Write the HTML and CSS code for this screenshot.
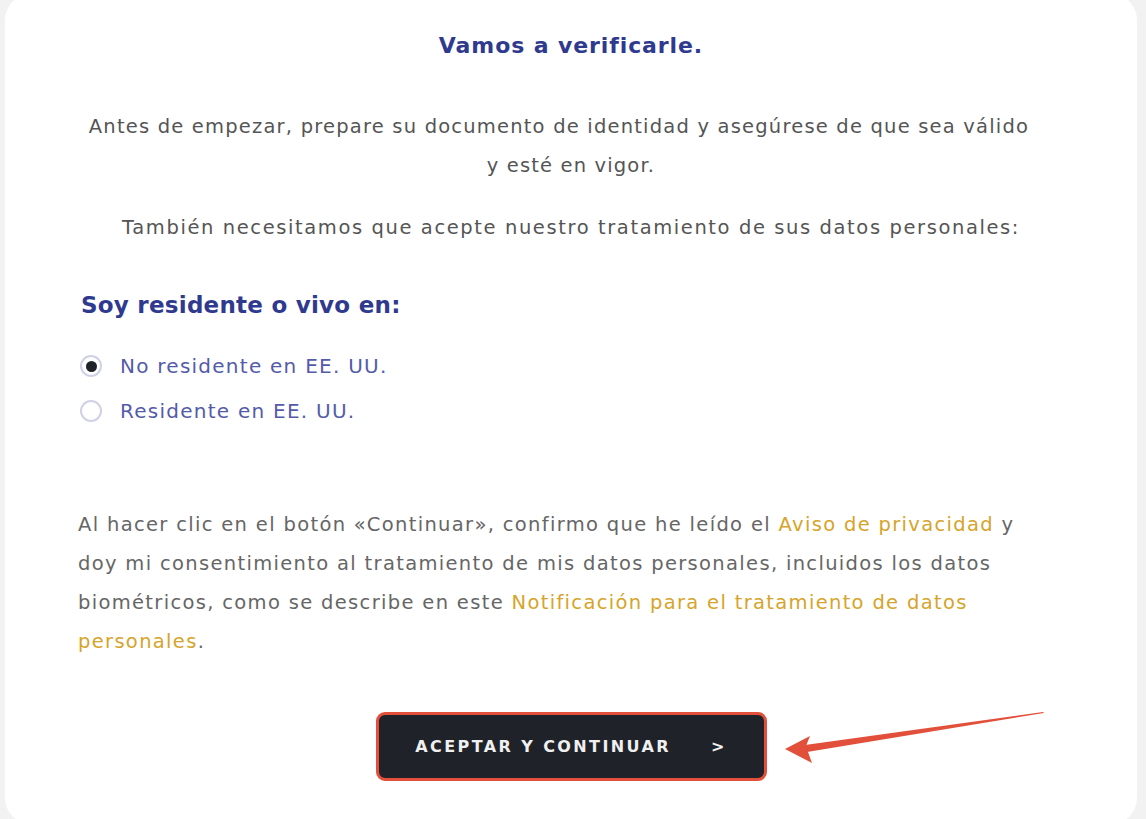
FILE: index.html
```html
<!DOCTYPE html>
<html lang="es">
<head>
<meta charset="utf-8">
<title>Vamos a verificarle</title>
<link rel="stylesheet" href="styles.css">
</head>
<body>
<main class="card">
  <h1 class="title">Vamos a verificarle.</h1>
  <p class="lead"><span class="first-line">Antes de empezar, prepare su documento de identidad y asegúrese de que sea válido</span><br>y esté en vigor.</p>
  <p class="lead lead-2">También necesitamos que acepte nuestro tratamiento de sus datos personales:</p>
  <h2 class="subtitle">Soy residente o vivo en:</h2>
  <div class="options">
    <label class="option"><span class="radio checked"></span><span class="option-text">No residente en EE. UU.</span></label>
    <label class="option"><span class="radio"></span><span class="option-text">Residente en EE. UU.</span></label>
  </div>
  <p class="consent">Al hacer clic en el botón «Continuar», confirmo que he leído el <a class="link">Aviso de privacidad</a> y doy mi consentimiento al tratamiento de mis datos personales, incluidos los datos biométricos, como se describe en este <a class="link">Notificación para el tratamiento de datos personales</a>.</p>
  <div class="actions">
    <button class="btn"><span>ACEPTAR Y CONTINUAR</span><span class="chev">&gt;</span></button>
  </div>
</main>
<svg class="arrow" width="270" height="60" viewBox="0 0 270 60">
  <polygon points="262,4 24,37 26,44 263,5" fill="#e2503b"/>
  <polygon points="4,41 29,28 25,38 27,44 31,55" fill="#e2503b"/>
</svg>
</body>
</html>
```
FILE: styles.css
```css
html, body {
  margin: 0;
  padding: 0;
  background: #f2f2f2;
  overflow: hidden;
}
body {
  font-family: "DejaVu Sans", sans-serif;
  width: 1146px;
  height: 819px;
  position: relative;
}
.card {
  box-sizing: border-box;
  margin: -6px 9px 0 5px;
  height: 830px;
  background: #ffffff;
  border-radius: 26px;
  padding: 37px 73px 0 73px;
}
.title {
  margin: 0;
  text-align: center;
  font-size: 22px;
  line-height: 30px;
  letter-spacing: 0.9px;
  font-weight: bold;
  color: #2f3a8f;
}
.lead {
  margin: 46px 0 0 0;
  text-align: center;
  font-size: 19.5px;
  line-height: 39px;
  letter-spacing: 1.15px;
  color: #555555;
}
.first-line {
  margin-right: 24px;
  letter-spacing: 1.2px;
}
.lead-2 {
  margin-top: 23px;
  letter-spacing: 1.6px;
}
.subtitle {
  margin: 42px 0 0 3px;
  font-size: 23px;
  line-height: 32px;
  letter-spacing: 0.25px;
  font-weight: bold;
  color: #2f3a8f;
}
.options {
  margin-top: 23px;
  display: flex;
  flex-direction: column;
  gap: 1px;
}
.option {
  display: flex;
  align-items: center;
  height: 44px;
  gap: 18px;
  padding-left: 2px;
}
.radio {
  box-sizing: border-box;
  width: 22px;
  height: 22px;
  border-radius: 50%;
  border: 2px solid #cfd1e4;
  display: flex;
  align-items: center;
  justify-content: center;
}
.radio.checked::after {
  content: "";
  width: 11px;
  height: 11px;
  border-radius: 50%;
  background: #1e2229;
}
.option-text {
  font-size: 20px;
  letter-spacing: 1.25px;
  color: #545ba8;
}
.consent {
  margin: 72px 24px 0 0;
  font-size: 19.5px;
  line-height: 39px;
  letter-spacing: 1.33px;
  color: #666666;
}
.link {
  color: #d6a42a;
}
.actions {
  margin-top: 51px;
  display: flex;
  justify-content: center;
}
.btn {
  box-sizing: border-box;
  width: 391px;
  height: 69px;
  border: 3px solid #e2503b;
  border-radius: 9px;
  background: #1f2329;
  color: #f0f0f0;
  font-family: "DejaVu Sans", sans-serif;
  font-weight: bold;
  font-size: 16px;
  letter-spacing: 2.4px;
  display: flex;
  align-items: center;
  justify-content: center;
  gap: 40px;
  padding: 0;
}
.chev {
  font-size: 16px;
}
.arrow {
  position: absolute;
  left: 781px;
  top: 708px;
}
```
